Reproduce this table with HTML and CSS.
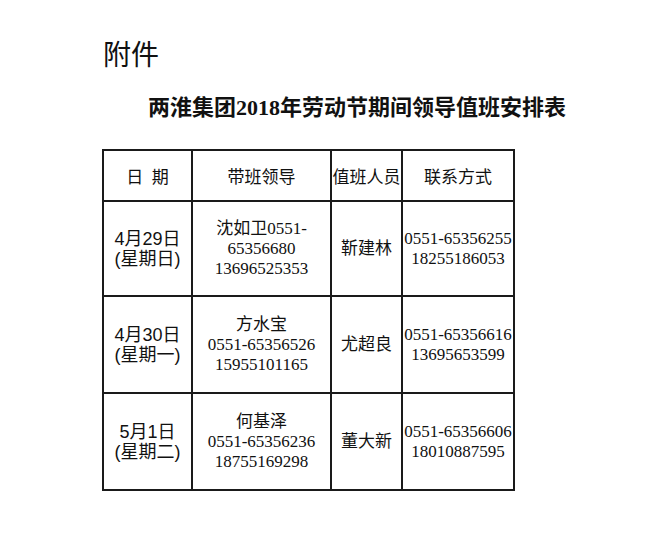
FILE: index.html
```html
<!DOCTYPE html>
<html lang="zh-CN">
<head>
<meta charset="utf-8">
<title>两淮集团2018年劳动节期间领导值班安排表</title>
<link rel="stylesheet" href="styles.css">
</head>
<body>
<div class="page">
  <div class="fujian">附件</div>
  <h1 class="title">两淮集团2018年劳动节期间领导值班安排表</h1>
  <table class="duty">
    <colgroup>
      <col class="c1"><col class="c2"><col class="c3"><col class="c4">
    </colgroup>
    <thead>
      <tr class="head">
        <th>日&ensp;期</th>
        <th>带班领导</th>
        <th>值班人员</th>
        <th>联系方式</th>
      </tr>
    </thead>
    <tbody>
      <tr class="r1">
        <td class="date">4月29日<br>(星期日)</td>
        <td>沈如卫0551-<br>65356680<br>13696525353</td>
        <td>靳建林</td>
        <td>0551-65356255<br>18255186053</td>
      </tr>
      <tr class="r2">
        <td class="date">4月30日<br>(星期一)</td>
        <td>方水宝<br>0551-65356526<br>15955101165</td>
        <td>尤超良</td>
        <td>0551-65356616<br>13695653599</td>
      </tr>
      <tr class="r3">
        <td class="date">5月1日<br>(星期二)</td>
        <td>何基泽<br>0551-65356236<br>18755169298</td>
        <td>董大新</td>
        <td>0551-65356606<br>18010887595</td>
      </tr>
    </tbody>
  </table>
</div>
</body>
</html>
```

FILE: styles.css
```css
html, body {
  margin: 0;
  padding: 0;
  background: #fff;
}

body {
  width: 650px;
  height: 538px;
  overflow: hidden;
  color: #111;
  font-family: "Liberation Serif", "Noto Sans CJK SC", serif;
}

.page {
  padding: 36px 0 0 102px;
}

.fujian {
  font-family: "Noto Sans CJK SC", sans-serif;
  font-size: 28px;
  line-height: 34px;
  margin-left: 1px;
}

.title {
  margin: 24px 0 0 46px;
  font-size: 22px;
  line-height: 28px;
  font-weight: bold;
  white-space: nowrap;
}

.duty {
  margin-top: 27px;
  border-collapse: collapse;
  table-layout: fixed;
  width: 411px;
}

.c1 { width: 89px; }
.c2 { width: 139px; }
.c3 { width: 71px; }
.c4 { width: 112px; }

.duty th,
.duty td {
  border: 2px solid #1a1a1a;
  padding: 0;
  text-align: center;
  vertical-align: middle;
  font-size: 17px;
  line-height: 20px;
  white-space: nowrap;
}

.duty th {
  font-family: "Noto Sans CJK SC", sans-serif;
  font-weight: normal;
}

.head { height: 51px; }
.r1 { height: 95px; }
.r2 { height: 97px; }
.r3 { height: 97px; }

.duty td.date {
  font-family: "Liberation Sans", "Noto Sans CJK SC", sans-serif;
  font-size: 18px;
  line-height: 20px;
}
```
